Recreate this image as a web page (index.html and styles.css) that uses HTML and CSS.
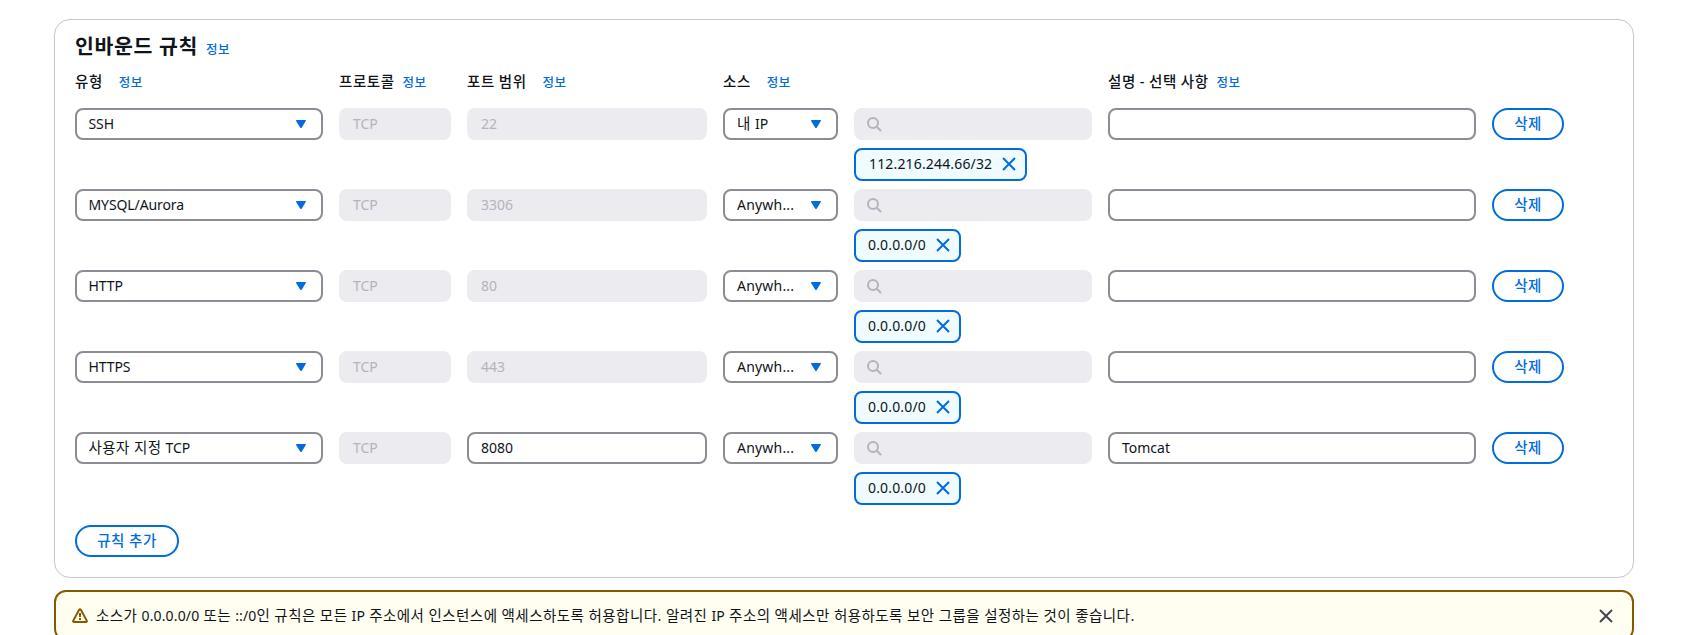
FILE: index.html
```html
<!DOCTYPE html>
<html lang="ko">
<head>
<meta charset="utf-8">
<title>인바운드 규칙</title>
<link rel="stylesheet" href="styles.css">
</head>
<body>
<svg class="sprite" aria-hidden="true">
  <symbol id="caret" viewBox="0 0 10 9"><path d="M0 .6Q0 0 .6 0h8.8q.6 0 .5.7L5.7 7.7q-.7.8-1.4 0L.1.9z" fill="currentColor"/></symbol>
  <symbol id="search" viewBox="0 0 16 16"><circle cx="7" cy="7" r="5" fill="none" stroke="currentColor" stroke-width="2"/><path d="M10.5 10.5 15 15" stroke="currentColor" stroke-width="2"/></symbol>
  <symbol id="close" viewBox="0 0 16 16"><path d="m2 2 12 12M14 2 2 14" fill="none" stroke="currentColor" stroke-width="2"/></symbol>
  <symbol id="warn" viewBox="0 0 16 16"><path d="M7.2 1.8q.8-1.2 1.6 0l6 11q.5 1.2-.6 1.2H1.8q-1.1 0-.6-1.2z" fill="none" stroke="currentColor" stroke-width="1.9" stroke-linejoin="round"/><path d="M8 5v4M8 10v2" stroke="currentColor" stroke-width="2"/></symbol>
</svg>
<main class="page">
  <section class="panel">
    <header class="heading"><h2>인바운드 규칙</h2><a class="info">정보</a></header>
    <div class="grid labels">
      <div class="label wide">유형<a class="info">정보</a></div>
      <div class="label">프로토콜<a class="info">정보</a></div>
      <div class="label wide">포트 범위<a class="info">정보</a></div>
      <div class="label wide">소스<a class="info">정보</a></div>
      <div></div>
      <div class="label">설명 - 선택 사항<a class="info">정보</a></div>
    </div>
    <div class="grid rule">
      <div class="field select type"><span>SSH</span><svg class="caret"><use href="#caret"/></svg></div>
      <div class="field disabled">TCP</div>
      <div class="field disabled">22</div>
      <div class="field select"><span><span class="ko">내 </span>IP</span><svg class="caret"><use href="#caret"/></svg></div>
      <div class="source"><div class="field disabled search"><svg><use href="#search"/></svg></div><div class="token long"><span>112.216.244.66/32</span><svg><use href="#close"/></svg></div></div>
      <div class="field"></div>
      <button class="button">삭제</button>
    </div>
    <div class="grid rule">
      <div class="field select type"><span>MYSQL/Aurora</span><svg class="caret"><use href="#caret"/></svg></div>
      <div class="field disabled">TCP</div>
      <div class="field disabled">3306</div>
      <div class="field select"><span class="source-type">Anywh...</span><svg class="caret"><use href="#caret"/></svg></div>
      <div class="source"><div class="field disabled search"><svg><use href="#search"/></svg></div><div class="token"><span>0.0.0.0/0</span><svg><use href="#close"/></svg></div></div>
      <div class="field"></div>
      <button class="button">삭제</button>
    </div>
    <div class="grid rule">
      <div class="field select type"><span>HTTP</span><svg class="caret"><use href="#caret"/></svg></div>
      <div class="field disabled">TCP</div>
      <div class="field disabled">80</div>
      <div class="field select"><span class="source-type">Anywh...</span><svg class="caret"><use href="#caret"/></svg></div>
      <div class="source"><div class="field disabled search"><svg><use href="#search"/></svg></div><div class="token"><span>0.0.0.0/0</span><svg><use href="#close"/></svg></div></div>
      <div class="field"></div>
      <button class="button">삭제</button>
    </div>
    <div class="grid rule">
      <div class="field select type"><span>HTTPS</span><svg class="caret"><use href="#caret"/></svg></div>
      <div class="field disabled">TCP</div>
      <div class="field disabled">443</div>
      <div class="field select"><span class="source-type">Anywh...</span><svg class="caret"><use href="#caret"/></svg></div>
      <div class="source"><div class="field disabled search"><svg><use href="#search"/></svg></div><div class="token"><span>0.0.0.0/0</span><svg><use href="#close"/></svg></div></div>
      <div class="field"></div>
      <button class="button">삭제</button>
    </div>
    <div class="grid rule">
      <div class="field select type"><span><span class="ko">사용자 지정 </span>TCP</span><svg class="caret"><use href="#caret"/></svg></div>
      <div class="field disabled">TCP</div>
      <div class="field">8080</div>
      <div class="field select"><span class="source-type">Anywh...</span><svg class="caret"><use href="#caret"/></svg></div>
      <div class="source"><div class="field disabled search"><svg><use href="#search"/></svg></div><div class="token"><span>0.0.0.0/0</span><svg><use href="#close"/></svg></div></div>
      <div class="field">Tomcat</div>
      <button class="button">삭제</button>
    </div>
    <button class="button add">규칙 추가</button>
  </section>
  <section class="alert">
    <svg class="warn"><use href="#warn"/></svg>
    <p>소스가 <span class="latin">0.0.0.0/0</span> 또는 <span class="latin">::/0</span>인 규칙은 모든 <span class="latin">IP</span> 주소에서 인스턴스에 액세스하도록 허용합니다. 알려진 <span class="latin">IP</span> 주소의 액세스만 허용하도록 보안 그룹을 설정하는 것이 좋습니다.</p>
    <svg class="dismiss"><use href="#close"/></svg>
  </section>
</main>
</body>
</html>
```
FILE: styles.css
```css
* { box-sizing: border-box; }
html { overflow: hidden; }
body {
  margin: 0;
  height: 635px;
  overflow: hidden;
  background: #fff;
  color: #0f141a;
  font: 14px/20px "Noto Sans", "Noto Sans CJK KR", sans-serif;
}
.sprite { display: none; }
.page { padding: 19px 58px 0 54px; }
.panel {
  height: 559px;
  padding: 13px 20px 20px;
  border: 1px solid #c6c6cd;
  border-radius: 16px;
}
.heading { display: flex; align-items: baseline; height: 26px; }
h2 { margin: 0; font-size: 20.5px; line-height: 26px; font-weight: 700; letter-spacing: .65px; }
.info { color: #006ce0; font-size: 12.5px; font-weight: 500; letter-spacing: .5px; margin-left: 8px; }
.grid {
  display: grid;
  grid-template-columns: 248px 112px 240px 115px 238px 368px 72px;
  column-gap: 16px;
  align-items: start;
}
.labels { height: 49px; padding-top: 12px; }
.label { white-space: nowrap; font-size: 14.5px; font-weight: 500; letter-spacing: .55px; word-spacing: -.3px; line-height: 20px; }
.wide .info { margin-left: 16px; }
.rule { height: 81px; }
.ko { font-size: 14.5px; line-height: 18px; letter-spacing: .4px; }
.field {
  display: flex;
  align-items: center;
  height: 32px;
  padding: 0 12px;
  border: 2px solid #8c8c94;
  border-radius: 8px;
  white-space: nowrap;
}
.select { justify-content: space-between; padding-right: 15px; }
.type { padding-left: 11.5px; }
.type > span { letter-spacing: -.1px; }
.source-type { letter-spacing: .2px; }
.caret { width: 10px; height: 9px; color: #006ce0; }
.disabled { border-color: #ebebf0; background: #ebebf0; color: #b4b4bb; }
.search { padding-left: 10px; }
.search svg, .token svg { width: 16px; height: 16px; }
.source { display: flex; flex-direction: column; align-items: flex-start; gap: 8px; }
.source .field { width: 100%; }
.token {
  display: flex;
  align-items: center;
  gap: 9px;
  height: 33px;
  padding: 0 8px 1px 12px;
  border: 2px solid #006ce0;
  border-radius: 8px;
  background: #f0fbff;
  letter-spacing: .16px;
}
.token.long { padding-left: 13px; }
.token svg { color: #006ce0; }
.button {
  height: 32px;
  padding: 0 0 2px;
  border: 2px solid #006ce0;
  border-radius: 16px;
  background: #fff;
  color: #006ce0;
  font: 500 14.5px/20px "Noto Sans", "Noto Sans CJK KR", sans-serif;
  letter-spacing: .5px;
}
.add { display: block; width: 104px; margin-top: 12px; }
.alert {
  display: flex;
  align-items: center;
  height: 51px;
  margin-top: 12px;
  padding: 0 18px 0 16px;
  border: 2px solid #855900;
  border-radius: 12px;
  background: #fffef0;
}
.warn { width: 16px; height: 16px; color: #855900; }
.alert p { flex: 1; margin: 0 0 0 8px; white-space: nowrap; font-size: 14.5px; letter-spacing: .47px; word-spacing: -.17px; }
.alert .latin { font-size: 14px; letter-spacing: .15px; }
.dismiss { width: 16px; height: 16px; color: #424650; }
```
